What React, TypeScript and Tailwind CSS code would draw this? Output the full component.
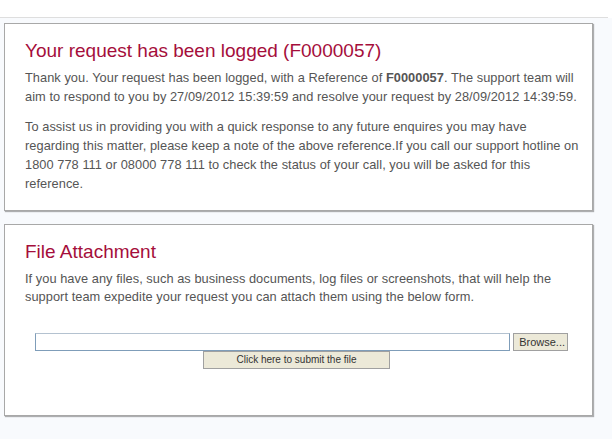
export default function App() {
  return (
    <div className="w-[612px] h-[439px] bg-white font-['Liberation_Sans',Arial,sans-serif] overflow-hidden">
      <div className="h-[17px]" />
      <div className="h-px w-[608px] bg-[#dedede]" />
      <div className="h-[421px] bg-[#f8fafd] pl-[4px] pt-[5px] flex flex-col gap-[13px]">
        {/* Confirmation panel */}
        <section className="w-[589px] h-[188px] bg-white border border-[#a8a8a8] shadow-[1px_1px_1px_rgba(0,0,0,0.3)] px-[20px] pt-[16px]">
          <h1 className="text-[19px] leading-[22px] text-[#a50e3b]">
            Your request has been logged (F0000057)
          </h1>
          <p className="mt-[6px] text-[12.8px] tracking-[0.05px] leading-[19px] text-[#555] whitespace-nowrap">
            Thank you. Your request has been logged, with a Reference of{" "}
            <b className="font-bold">F0000057</b>. The support team will
            <br />
            aim to respond to you by 27/09/2012 15:39:59 and resolve your request by 28/09/2012 14:39:59.
          </p>
          <p className="mt-[11px] text-[12.8px] tracking-[0.05px] leading-[19px] text-[#555] whitespace-nowrap">
            To assist us in providing you with a quick response to any future enquires you may have
            <br />
            regarding this matter, please keep a note of the above reference.If you call our support hotline on
            <br />
            1800 778 111 or 08000 778 111 to check the status of your call, you will be asked for this
            <br />
            reference.
          </p>
        </section>

        {/* Upload panel */}
        <section className="w-[589px] h-[192px] bg-white border border-[#a8a8a8] shadow-[1px_1px_1px_rgba(0,0,0,0.3)] px-[20px] pt-[16px]">
          <h2 className="text-[19px] leading-[22px] text-[#a50e3b]">File Attachment</h2>
          <p className="mt-[7px] text-[12.8px] tracking-[0.05px] leading-[18px] text-[#555] whitespace-nowrap">
            If you have any files, such as business documents, log files or screenshots, that will help the
            <br />
            support team expedite your request you can attach them using the below form.
          </p>
          <div className="mt-[27px] ml-[10px] flex gap-[3px]">
            <div className="w-[475px] h-[18px] bg-white border border-[#7f9db9] border-t-[#b4c2d0]" />
            <button className="w-[55px] h-[18px] bg-[#ece9d8] border border-[#a0a0a0] text-[11px] leading-[16px] text-[#333] text-right pr-[2px]">
              Browse...
            </button>
          </div>
          <div className="flex pl-[178px]">
            <button className="w-[187px] h-[18px] bg-[#ece9d8] border border-[#a0a0a0] text-[10px] leading-[16px] text-[#333]">
              Click here to submit the file
            </button>
          </div>
        </section>
      </div>
    </div>
  );
}
